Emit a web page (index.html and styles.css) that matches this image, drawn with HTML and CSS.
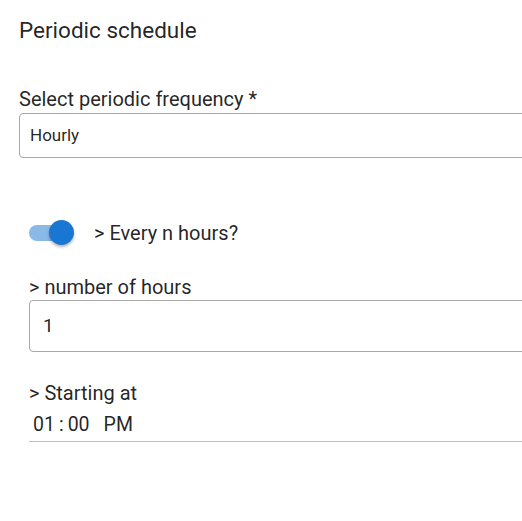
FILE: index.html
```html
<!DOCTYPE html>
<html>
<head>
<meta charset="utf-8">
<link rel="stylesheet" href="styles.css">
</head>
<body>
<div class="page">
  <h1 class="title">Periodic schedule</h1>
  <div class="field">
    <label class="label">Select periodic frequency *</label>
    <div class="select">Hourly</div>
  </div>
  <div class="sub">
    <div class="toggle-row">
      <span class="switch"><span class="track"></span><span class="thumb"></span></span>
      <span class="toggle-label">&gt; Every n hours?</span>
    </div>
    <div class="field2">
      <label class="label sublabel">&gt; number of hours</label>
      <div class="input">1</div>
    </div>
    <div class="field3">
      <label class="label sublabel">&gt; Starting at</label>
      <div class="time"><span>01</span><span class="colon">:</span><span>00</span><span class="ampm">PM</span></div>
    </div>
  </div>
</div>
</body>
</html>
```
FILE: styles.css
```css
html, body { margin: 0; padding: 0; overflow: hidden; background: #fff; }
body { font-family: Roboto, "Noto Sans", sans-serif; color: rgba(0,0,0,0.87); }
.page { width: 560px; padding-left: 19px; }
.title { margin: 0; padding-top: 18px; font-size: 22.5px; font-weight: 400; line-height: 24px; }
.field { margin-top: 46px; }
.label { display: block; font-size: 20px; line-height: 22px; }
.sublabel { font-size: 20px; }
.select { margin-top: 3px; height: 43px; border: 1px solid #a8a8a8; border-radius: 4px; box-sizing: content-box; padding-left: 10px; font-size: 17px; line-height: 43px; }
.sub { padding-left: 10px; }
.toggle-row { display: flex; align-items: center; margin-top: 62px; height: 26px; }
.switch { position: relative; width: 46px; height: 26px; flex: none; }
.track { position: absolute; left: 0; top: 5px; width: 38px; height: 16px; border-radius: 8px; background: #8ab9e8; }
.thumb { position: absolute; left: 20px; top: 0; width: 25px; height: 25px; border-radius: 50%; background: #1976d2; box-shadow: 0 2px 3px rgba(0,0,0,0.3); }
.toggle-label { margin-left: 19px; font-size: 20px; line-height: 22px; }
.field2 { margin-top: 30px; }
.input { margin-top: 2px; height: 50px; border: 1px solid #a8a8a8; border-radius: 4px; padding-left: 13px; font-size: 19px; line-height: 50px; }
.field3 { margin-top: 30px; }
.time { margin-top: 8px; padding-left: 4px; height: 29px; font-size: 19.5px; line-height: 26px; border-bottom: 1px solid #bdbdbd; display: flex; }
.colon { margin: 0 4px; }
.ampm { margin-left: 14px; }
```
